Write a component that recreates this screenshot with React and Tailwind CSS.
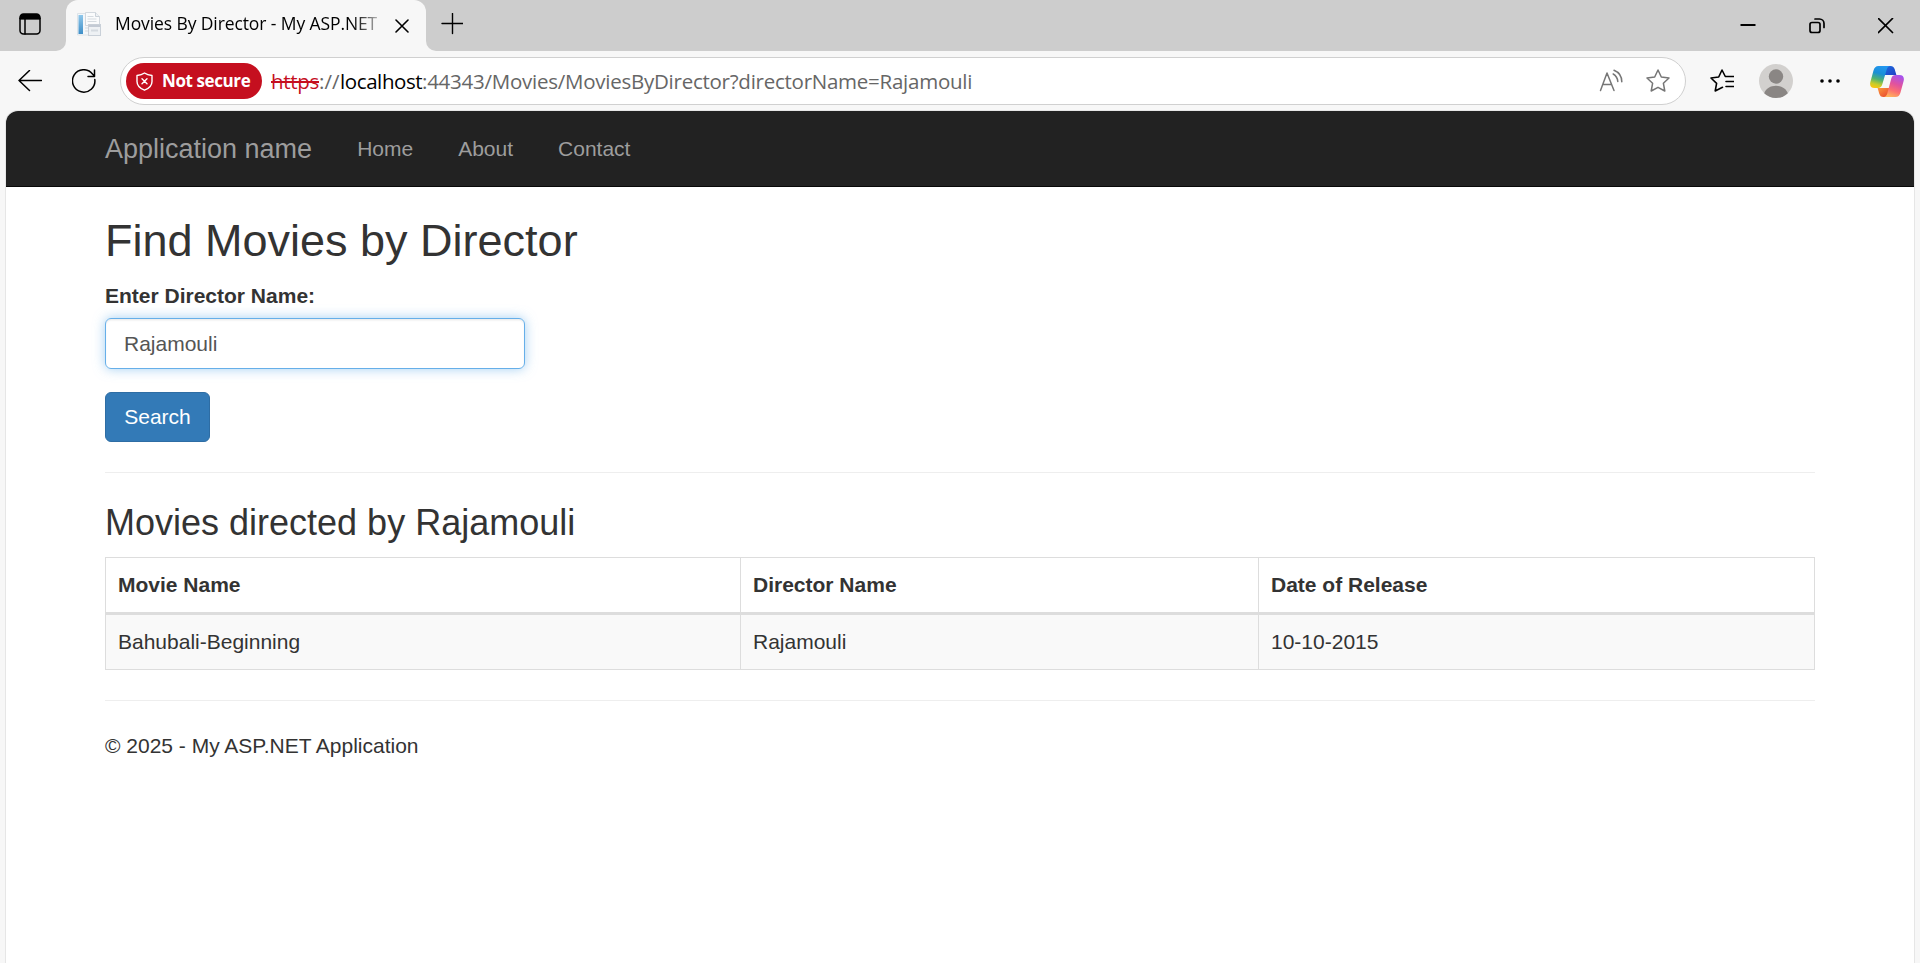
const iconProps = { fill: "none", stroke: "currentColor", strokeLinecap: "round", strokeLinejoin: "round" };

const STAR = "M12 1 L15.3 8 L23 9 L17.4 14.3 L18.8 22 L12 18.3 L5.2 22 L6.6 14.3 L1 9 L8.7 8 Z";

function TabActionsIcon() {
  return (
    <svg width="22" height="22" viewBox="0 0 22 22" {...iconProps} strokeWidth="1.5">
      <rect x="1" y="1" width="20" height="20" rx="3.5" />
      <path d="M1 6.5V4.5A3.5 3.5 0 0 1 4.5 1h13A3.5 3.5 0 0 1 21 4.500v2Z" fill="currentColor" stroke="none" />
      <path d="M1 5.500h20M6 6v15" />
    </svg>
  );
}

function PageFavicon() {
  return (
    <svg width="25" height="25" viewBox="0 0 25 25">
      <defs>
        <linearGradient id="spine" x1="0" y1="0" x2="0" y2="1">
          <stop offset="0" stopColor="#8fc7ea" />
          <stop offset="1" stopColor="#3f8fc8" />
        </linearGradient>
      </defs>
      <path d="M.5 1.500h17l4.500 4.500v17H.5z" fill="#f4f7fa" stroke="#dde3e8" />
      <path d="M8.500 .5h10l4 4v9h-14z" fill="#fafbfc" stroke="#d3d9df" />
      <path d="M18.500 .5v4h4" fill="#eef1f4" stroke="#cbd2d9" />
      <rect x="1.500" y="3" width="4.500" height="19" fill="url(#spine)" />
      <path d="M10.500 4.500h6M10.500 7h9M10.500 9.500h9M8 16h3M8 19h3" stroke="#d5dbe0" />
      <rect x="11.500" y="12.500" width="12" height="11" fill="#eef1f4" stroke="#c9d0d8" />
      <path d="M12 14h11" stroke="#c3cad4" strokeWidth="2" />
      <path d="M14 18.500h7" stroke="#d5dae0" strokeWidth="2" />
    </svg>
  );
}

function CopilotIcon() {
  return (
    <svg width="34" height="31" viewBox="0 0 34 31">
      <defs>
        <linearGradient id="cpA" x1=".6" y1="0" x2=".35" y2="1">
          <stop offset="0" stopColor="#2397f0" />
          <stop offset=".35" stopColor="#1a8fd6" />
          <stop offset=".62" stopColor="#4fb272" />
          <stop offset=".85" stopColor="#c8cc2a" />
          <stop offset="1" stopColor="#f5c614" />
        </linearGradient>
        <linearGradient id="cpB" x1=".7" y1="0" x2=".35" y2="1">
          <stop offset="0" stopColor="#a653ee" />
          <stop offset=".4" stopColor="#e0529f" />
          <stop offset=".7" stopColor="#fb6f72" />
          <stop offset="1" stopColor="#ffb35c" />
        </linearGradient>
        <linearGradient id="cpC" x1="0" y1="0" x2="1" y2="1">
          <stop offset="0" stopColor="#1f6fe0" />
          <stop offset="1" stopColor="#1e3fc4" />
        </linearGradient>
        <linearGradient id="cpD" x1="0" y1="0" x2="1" y2="1">
          <stop offset="0" stopColor="#fb9a3c" />
          <stop offset="1" stopColor="#e8402f" />
        </linearGradient>
      </defs>
      <path d="M14 0h6.500c2.500 0 3.600 1.300 4.200 3.300l1.700 5.700H14z" fill="url(#cpC)" />
      <path d="M20 31h-6.500c-2.500 0-3.600-1.300-4.200-3.300L7.600 22H20z" fill="url(#cpD)" />
      <path d="M8.500 0h11.800c-1.800 0-2.900 1.400-3.500 3.300l-4.500 15c-.8 2.600-2 3.700-4.300 3.700H4.600C1 22-.5 19.600.3 16.200L3.500 4.500C4.400 1.500 5.800 0 8.500 0Z" fill="url(#cpA)" />
      <path d="M25.500 31H13.700c1.800 0 2.900-1.400 3.500-3.300l4-15C22 10.100 23.400 9 25.700 9h3.700c3.600 0 5.100 2.400 4.300 5.800l-3.200 11.700c-.9 3-2.300 4.500-5 4.500Z" fill="url(#cpB)" />
    </svg>
  );
}

function TabStrip() {
  return (
    <div className="flex h-[51px] bg-[#f7f7f7] text-black">
      <div className="w-[66px] rounded-br-[10px] bg-[#cdcdcd] pt-[13px] pl-[19px]">
        <TabActionsIcon />
      </div>
      <div className="w-[360px] bg-[#cdcdcd]">
        <div className="flex h-full items-center rounded-t-[12px] bg-[#f7f7f7] pb-[3px] pl-[11px]">
          <PageFavicon />
          <div className="ml-[13px] w-[265px] overflow-hidden bg-gradient-to-r from-black from-88% to-[#c8c8c8] bg-clip-text pb-[2px] font-['Open_Sans','Noto_Sans',sans-serif] text-[17.5px] leading-[26px] tracking-[-0.1px] whitespace-nowrap text-transparent">
            Movies By Director - My ASP.NET
          </div>
          <svg className="mt-[3px] ml-[15px]" width="14" height="14" viewBox="0 0 14 14" {...iconProps} strokeWidth="1.6">
            <path d="M1 1l12 12M13 1L1 13" />
          </svg>
        </div>
      </div>
      <div className="flex flex-1 rounded-bl-[10px] bg-[#cdcdcd]">
        <svg className="mt-[13px] ml-[15px]" width="22" height="22" viewBox="0 0 22 22" {...iconProps} strokeWidth="1.4">
          <path d="M11.500 .5v20M1 10.500h21" />
        </svg>
        <div className="ml-auto flex">
          <div className="flex w-[69px] justify-center pt-[18px]">
            <svg width="16" height="16" viewBox="0 0 16 16" {...iconProps} strokeLinecap="butt" strokeWidth="2">
              <path d="M.5 7h15" />
            </svg>
          </div>
          <div className="flex w-[69px] justify-center pt-[18px]">
            <svg width="16" height="16" viewBox="0 0 16 16" {...iconProps} strokeWidth="1.700">
              <rect x="1" y="4.500" width="10" height="10" rx="2" />
              <path d="M6 1h4.500A4.500 4.500 0 0 1 15 5.500V9.500" />
            </svg>
          </div>
          <div className="flex w-[69px] justify-center pt-[18px]">
            <svg width="16" height="16" viewBox="0 0 16 16" {...iconProps} strokeWidth="1.700">
              <path d="M.5 .5l14 14M14.500 .5l-14 14" />
            </svg>
          </div>
        </div>
      </div>
    </div>
  );
}

function AddressBar() {
  return (
    <div className="ml-[24px] flex h-[48px] w-[1566px] items-center rounded-full border-[1.5px] border-[#d0d0d0] bg-white pl-[5px] font-['Open_Sans','Noto_Sans',sans-serif]">
      <div className="flex h-[36px] w-[136px] items-center rounded-full bg-[#c50f1f] pl-[10px] text-white">
        <svg width="17" height="19" viewBox="0 0 17 19" {...iconProps} strokeWidth="1.400">
          <path d="M8.500 1C6.400 2.600 4 3.300 1 3.500v6c0 4 2.600 6.800 7.500 8.700 4.900-1.900 7.500-4.700 7.500-8.700v-6C13 3.300 10.600 2.600 8.500 1ZM6 6.700l5 5M11 6.700l-5 5" />
        </svg>
        <span className="ml-[9px] text-[17px] font-bold tracking-[-0.4px] whitespace-nowrap">Not secure</span>
      </div>
      <div className="ml-[9px] flex text-[20.5px] leading-[30px] whitespace-nowrap text-[#666]">
        <span className="w-[48px] tracking-[-0.3px] text-[#c50f1f] line-through decoration-2">https</span>
        <span className="w-[21px]">://</span>
        <span className="w-[82px] tracking-[-0.4px] text-black">localhost</span>
        <span className="tracking-[-0.25px]">:44343/Movies/MoviesByDirector?directorName=Rajamouli</span>
      </div>
      <div className="mr-[15px] ml-auto flex items-center gap-[23px] text-[#767676]">
        <svg width="24" height="24" viewBox="0 0 24 24" {...iconProps} strokeWidth="1.500">
          <path d="M1.500 21.500L8 4l7 17.500M4 15.500h8.600M14.200 5a9.500 9.500 0 0 1 4.600 7.500M15 1.200a12.500 12.500 0 0 1 7.800 11.500" />
        </svg>
        <svg width="24" height="24" viewBox="0 0 24 24" {...iconProps} strokeWidth="1.500">
          <path d={STAR} />
        </svg>
      </div>
    </div>
  );
}

function Toolbar() {
  return (
    <div className="flex h-[60px] items-center bg-[#f7f7f7] text-black">
      <svg className="ml-[18px]" width="24" height="22" viewBox="0 0 24 22" {...iconProps} strokeWidth="1.500">
        <path d="M11.500 .5L1 10.500l10.500 10M1 10.500h22.500" />
      </svg>
      <svg className="ml-[30px]" width="24" height="24" viewBox="0 0 24 24" {...iconProps} strokeWidth="1.500">
        <path d="M22.800 10.500A11.200 11.200 0 1 1 20.500 5L22.500 7.200M22.500 1v6.500H16" />
      </svg>
      <AddressBar />
      <svg className="ml-[24px]" width="24" height="24" viewBox="0 0 24 24" {...iconProps} strokeWidth="1.600">
        <path d="M12.500 18.300L5.200 22l1.400-7.700L1 9l7.700-1L12 1l3.300 6.500H23.500M16 12.500h7.500M16 17.500h7.500" />
      </svg>
      <svg className="ml-[25px]" width="34" height="34" viewBox="0 0 34 34">
        <circle cx="17" cy="17" r="17" fill="#d2d0ce" />
        <circle cx="17" cy="12.500" r="7.200" fill="#8a8684" />
        <path d="M5.200 29.200C7 24.500 11.500 21.800 17 21.800s10 2.700 11.800 7.400A17 17 0 0 1 5.200 29.200Z" fill="#8a8684" />
      </svg>
      <svg className="ml-[27px]" width="20" height="4" viewBox="0 0 20 4" fill="currentColor">
        <circle cx="2" cy="2" r="1.800" />
        <circle cx="10" cy="2" r="1.800" />
        <circle cx="18" cy="2" r="1.800" />
      </svg>
      <div className="ml-[30px]">
        <CopilotIcon />
      </div>
    </div>
  );
}

function NavBar() {
  return (
    <nav className="flex h-[76px] items-center border-b-[1.5px] border-[#080808] bg-[#222] pl-[99px] text-[21px] text-[#9d9d9d]">
      <span className="mr-[45px] text-[27px]">Application name</span>
      <div className="flex gap-[45px]">
        <span>Home</span>
        <span>About</span>
        <span>Contact</span>
      </div>
    </nav>
  );
}

const columns = ["Movie Name", "Director Name", "Date of Release"];
const movies = [["Bahubali-Beginning", "Rajamouli", "10-10-2015"]];

function MoviesTable() {
  return (
    <div className="border border-[#ddd]">
      <div className="grid grid-cols-[635px_518px_1fr] divide-x divide-[#ddd] border-b-[3px] border-[#ddd] font-bold">
        {columns.map((name) => (
          <div key={name} className="p-[12px]">{name}</div>
        ))}
      </div>
      {movies.map((row) => (
        <div key={row[0]} className="grid grid-cols-[635px_518px_1fr] divide-x divide-[#ddd] bg-[#f9f9f9]">
          {row.map((cell) => (
            <div key={cell} className="p-[12px]">{cell}</div>
          ))}
        </div>
      ))}
    </div>
  );
}

function Page() {
  return (
    <div className="mx-[6px] h-[852px] overflow-hidden rounded-t-[12px] bg-white font-['Liberation_Sans',Arial,sans-serif] text-[21px] leading-[30px] text-[#333] shadow-[0_0_0_1px_#e6e6e6]">
      <NavBar />
      <main className="flex flex-col px-[99px] pt-[29px]">
        <h2 className="text-[45px] leading-[50px]">Find Movies by Director</h2>
        <label htmlFor="director" className="mt-[15px] font-bold">Enter Director Name:</label>
        <input
          id="director"
          defaultValue="Rajamouli"
          className="mt-[7px] h-[51px] w-[420px] rounded-[6px] border border-[#66afe9] px-[18px] text-[#555] shadow-[inset_0_1.5px_1.5px_rgba(0,0,0,.075),0_0_12px_rgba(102,175,233,.6)] outline-none"
        />
        <button className="mt-[23px] h-[50px] w-[105px] rounded-[6px] border border-[#2e6da4] bg-[#337ab7] text-white">
          Search
        </button>
        <hr className="mt-[30px] border-[#eee]" />
        <h3 className="mt-[30px] mb-[14px] text-[36px] leading-[40px]">Movies directed by Rajamouli</h3>
        <MoviesTable />
        <hr className="mt-[30px] border-[#eee]" />
        <footer className="mt-[30px]">© 2025 - My ASP.NET Application</footer>
      </main>
    </div>
  );
}

export default function App() {
  return (
    <div className="h-[963px] overflow-hidden bg-[#f7f7f7]">
      <TabStrip />
      <Toolbar />
      <Page />
    </div>
  );
}
